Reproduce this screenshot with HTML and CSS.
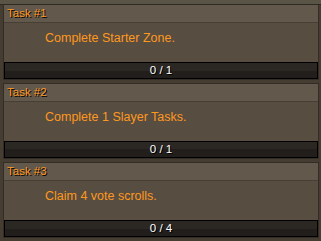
FILE: index.html
```html
<!DOCTYPE html>
<html lang="en">
<head>
  <meta charset="UTF-8">
  <title>Tasks</title>
  <link rel="stylesheet" href="styles.css">
</head>
<body>
  <div class="top-band"></div>
  <div class="task-list">
    <div class="task">
      <div class="task-header">Task #1</div>
      <div class="task-body">Complete Starter Zone.</div>
      <div class="task-bar">0 / 1</div>
    </div>
    <div class="task">
      <div class="task-header">Task #2</div>
      <div class="task-body">Complete 1 Slayer Tasks.</div>
      <div class="task-bar">0 / 1</div>
    </div>
    <div class="task">
      <div class="task-header">Task #3</div>
      <div class="task-body">Claim 4 vote scrolls.</div>
      <div class="task-bar">0 / 4</div>
    </div>
  </div>
</body>
</html>
```

FILE: styles.css
```css
body {
  margin: 0;
  padding: 0;
  width: 321px;
  height: 241px;
  overflow: hidden;
  background-color: #463d32;
  font-family: 'Liberation Sans', Arial, sans-serif;
}
.top-band {
  height: 4px;
  background-color: #5a5447;
  border-bottom: 1px solid #2e2922;
}
.task-list {
  display: flex;
  flex-direction: column;
  gap: 3px;
  padding: 0 2px 0 3px;
}
.task {
  border: 1px solid #342d25;
  border-top: none;
  background-color: #574d41;
}
.task-list .task + .task {
  border-top: 1px solid #342d25;
}
.task-header {
  height: 17px;
  line-height: 17px;
  padding-left: 3px;
  background-color: #62584b;
  border-bottom: 1px solid #473e34;
  color: #ff981f;
  font-size: 11.5px;
  text-shadow: 1px 1px 0 #000;
}
.task-body {
  height: 31px;
  padding: 8px 0 0 41px;
  color: #ff981f;
  font-size: 12.5px;
  line-height: 15px;
}
.task-bar {
  height: 15px;
  line-height: 15px;
  border: 1px solid #000;
  background: linear-gradient(#2b2723 50%, #211e1b 50%);
  color: #fff;
  font-size: 11.5px;
  text-align: center;
  text-shadow: 1px 1px 0 #000;
}
```
